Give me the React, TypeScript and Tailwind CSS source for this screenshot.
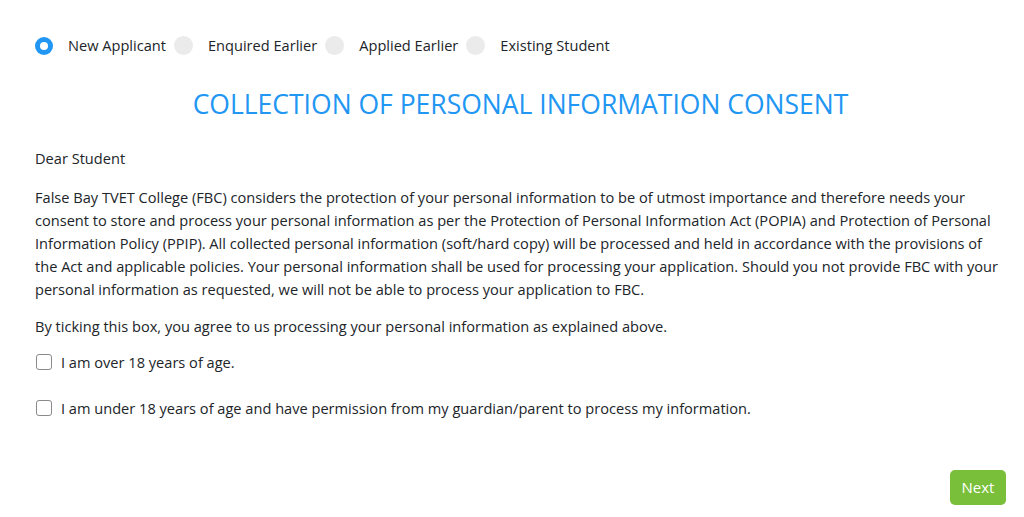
const options = ["New Applicant", "Enquired Earlier", "Applied Earlier", "Existing Student"];

const Radio = ({ label, checked }: { label: string; checked?: boolean }) => (
  <label className="flex items-center">
    {checked ? (
      <span className="w-[18px] h-[18px] rounded-full bg-[#2196f3] flex items-center justify-center">
        <span className="w-[8px] h-[8px] rounded-full bg-white" />
      </span>
    ) : (
      <span className="w-[19px] h-[19px] rounded-full bg-[#ebebeb]" />
    )}
    <span className="ml-[15px] mr-[8px]">{label}</span>
  </label>
);

const Check = ({ label }: { label: string }) => (
  <label className="flex items-center">
    <span className="w-[16px] h-[16px] rounded-[3px] border border-[#8a8a8a] bg-white ml-px" />
    <span className="ml-[9px]">{label}</span>
  </label>
);

export default function App() {
  return (
    <div className="w-[1024px] h-[517px] bg-white text-[#212529] text-[14.6px] font-['Open_Sans',sans-serif] flex flex-col px-[35px] pt-[35px] pr-[18px]">
      <div className="flex items-center gap-0">
        {options.map((o, i) => (
          <Radio key={o} label={o} checked={i === 0} />
        ))}
      </div>

      <h1 className="text-center text-[#2196f3] text-[26.5px] leading-[36px] mt-[29px] mb-[25px]">
        COLLECTION OF PERSONAL INFORMATION CONSENT
      </h1>

      <div className="leading-[23px]">
        <p className="mb-[16px]">Dear Student</p>
        <p className="mb-[14px]">
          False Bay TVET College (FBC) considers the protection of your personal information to be of utmost
          importance and therefore needs your consent to store and process your personal information as per the
          Protection of Personal Information Act (POPIA) and Protection of Personal Information Policy (PPIP). All
          collected personal information (soft/hard copy) will be processed and held in accordance with the
          provisions of the Act and applicable policies. Your personal information shall be used for processing
          your application. Should you not provide FBC with your personal information as requested, we will not be
          able to process your application to FBC.
        </p>
        <p className="mb-[13px]">
          By ticking this box, you agree to us processing your personal information as explained above.
        </p>
        <div className="flex flex-col gap-[23px]">
          <Check label="I am over 18 years of age." />
          <Check label="I am under 18 years of age and have permission from my guardian/parent to process my information." />
        </div>
      </div>

      <div className="flex justify-end mt-auto mb-[12px]">
        <button className="bg-[#79bf39] text-white text-[15px] rounded-[5px] w-[56px] h-[35px]">Next</button>
      </div>
    </div>
  );
}
